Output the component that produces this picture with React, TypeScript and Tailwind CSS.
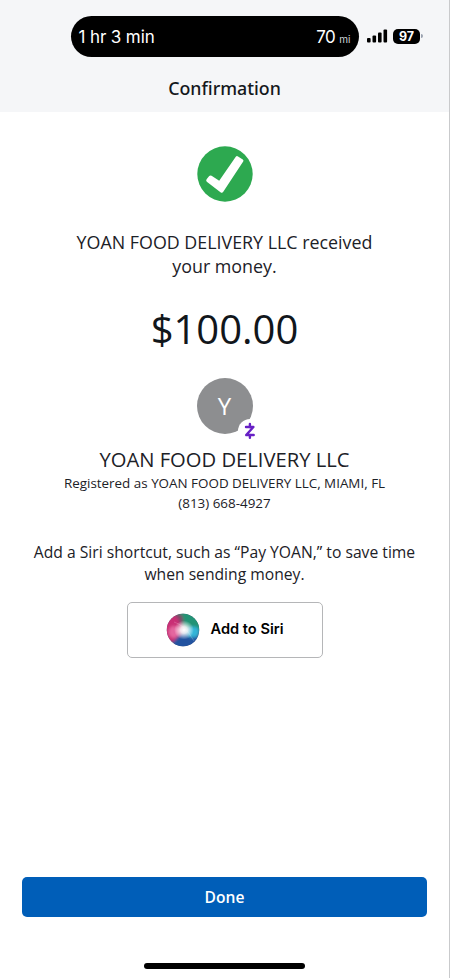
function StatusBar() {
  return (
    <div className="flex items-center pt-[15.5px] pl-[70.5px]">
      <div className="flex h-[41px] w-[288px] items-center justify-between rounded-full bg-black pt-[3px] pr-[8px] pl-[8px] font-['Inter',sans-serif] text-white">
        <span className="text-[17px] tracking-[-0.12px] whitespace-nowrap">1 hr 3 min</span>
        <span className="flex items-baseline gap-[4px]">
          <span className="text-[17px] tracking-[-0.5px]">70</span>
          <span className="text-[10px] text-gray-300">mi</span>
        </span>
      </div>
      <svg className="ml-[7.5px]" width="22" height="14" viewBox="0 0 22 14" fill="black">
        <rect x="1" y="9" width="3.6" height="4.5" rx="1" />
        <rect x="6.5" y="6.5" width="3.6" height="7" rx="1" />
        <rect x="12" y="3.5" width="3.6" height="10" rx="1" />
        <rect x="17.5" y="0.5" width="3.6" height="13" rx="1" />
      </svg>
      <div className="ml-[5px] flex h-[15px] w-[27px] items-center justify-center rounded-[5px] bg-black pt-[2px] font-['Inter',sans-serif] text-[12.5px] leading-none font-bold text-white">
        97
      </div>
      <div className="ml-px h-[4px] w-[1.5px] rounded-r-full bg-gray-400" />
    </div>
  )
}

function CheckBadge() {
  return (
    <svg width="56" height="56" viewBox="0 0 56 56">
      <circle cx="28" cy="28" r="27.7" fill="#2da950" />
      <path
        d="M9.6 33.3 L12.2 30 Q13.2 28.9 14.6 29.8 L22.2 34.8 L38.6 11 Q39.6 9.6 41 10.4 L45.8 13.4 Q47 14.2 46.2 15.5 L26.1 46 Q25.1 47.3 23.8 46.4 L9.8 35.7 Q8.6 34.7 9.6 33.3 Z"
        fill="white"
      />
    </svg>
  )
}

function Avatar() {
  return (
    <div className="relative flex size-[56px] items-center justify-center rounded-full bg-[#8d8e90] text-[24px] text-white">
      Y
      <span className="absolute top-[41px] left-[41px] flex size-[24px] items-center justify-center rounded-full bg-white">
        <svg width="12" height="18" viewBox="0 0 12 18" fill="none" stroke="#6720c5" strokeWidth="2.4" strokeLinecap="round" strokeLinejoin="round">
          <path d="M2 5 H9.4 L2.2 13 H9.7" />
          <path d="M5.9 2 V5 M5.9 13 V15.8" />
        </svg>
      </span>
    </div>
  )
}

function SiriOrb() {
  return (
    <svg width="34" height="34" viewBox="0 0 34 34">
      <defs>
        <clipPath id="orb">
          <circle cx="17" cy="17" r="16.2" />
        </clipPath>
        <radialGradient id="glow">
          <stop offset="0" stopColor="white" />
          <stop offset="0.35" stopColor="white" stopOpacity="0.85" />
          <stop offset="1" stopColor="white" stopOpacity="0" />
        </radialGradient>
        <filter id="soft" x="-50%" y="-50%" width="200%" height="200%">
          <feGaussianBlur stdDeviation="1.8" />
        </filter>
      </defs>
      <g clipPath="url(#orb)">
        <rect width="34" height="34" fill="#45506f" />
        <g filter="url(#soft)">
          <path d="M10 -4 H38 V17 L18 15 Z" fill="#229375" />
          <path d="M-3 8 L7 0 L12 5 L18 16 L8 29 L-3 28 Z" fill="#c92f75" />
          <path d="M8 0 L16 2 L18 12 Z" fill="#7a4a68" />
          <path d="M6 30 L18 18 L34 24 L28 38 H8 Z" fill="#2353a0" />
          <ellipse cx="27" cy="19" rx="6.5" ry="5.5" fill="#31b5d8" />
          <ellipse cx="8" cy="19" rx="5.5" ry="6" fill="#e4669f" />
        </g>
        <path d="M8 9 Q19 12 28 28" fill="none" stroke="white" strokeOpacity="0.2" strokeWidth="1" />
        <ellipse cx="18" cy="17" rx="10" ry="9.5" fill="url(#glow)" />
      </g>
    </svg>
  )
}

export default function App() {
  return (
    <div className="flex h-[978px] w-[450px] flex-col overflow-hidden border-r border-[#c9cacc] bg-white font-['Open_Sans',sans-serif] text-[#1c2127]">
      <header className="h-[112px] shrink-0 bg-[#f5f6f8]">
        <StatusBar />
        <h1 className="mt-[19px] text-center font-['Noto_Sans','Open_Sans',sans-serif] text-[17.8px] leading-[24px] font-medium text-[#14181c]">
          Confirmation
        </h1>
      </header>

      <main className="flex flex-1 flex-col items-center pt-[34px] text-center">
        <CheckBadge />
        <p className="mt-[28px] text-[17.85px] leading-[24px]">
          YOAN FOOD DELIVERY LLC received
          <br />
          your money.
        </p>
        <p className="mt-[25px] text-[40px] leading-[52px] text-[#11161b]">$100.00</p>
        <div className="mt-[23px]">
          <Avatar />
        </div>
        <h2 className="mt-[11px] text-[20.2px] leading-[28px]">YOAN FOOD DELIVERY LLC</h2>
        <p className="text-[13.42px] leading-[20px]">
          Registered as YOAN FOOD DELIVERY LLC, MIAMI, FL
          <br />
          (813) 668-4927
        </p>
        <p className="mt-[28px] text-[15.68px] leading-[22px]">
          Add a Siri shortcut, such as “Pay YOAN,” to save time
          <br />
          when sending money.
        </p>
        <button className="mt-[16.5px] flex h-[56px] w-[196px] items-center justify-center gap-[11px] rounded-[5px] border-[1.5px] border-[#b5b6b8] font-['Inter',sans-serif] text-[14.6px] font-semibold text-black">
          <SiriOrb />
          <span className="pt-px">Add to Siri</span>
        </button>
      </main>

      <footer className="flex h-[101px] shrink-0 flex-col items-center">
        <button className="h-[40px] w-[405px] rounded-[5px] bg-[#005eb8] pt-px text-[15.6px] font-semibold text-white">Done</button>
        <div className="mt-[46px] h-[6px] w-[161px] rounded-full bg-black" />
      </footer>
    </div>
  )
}
